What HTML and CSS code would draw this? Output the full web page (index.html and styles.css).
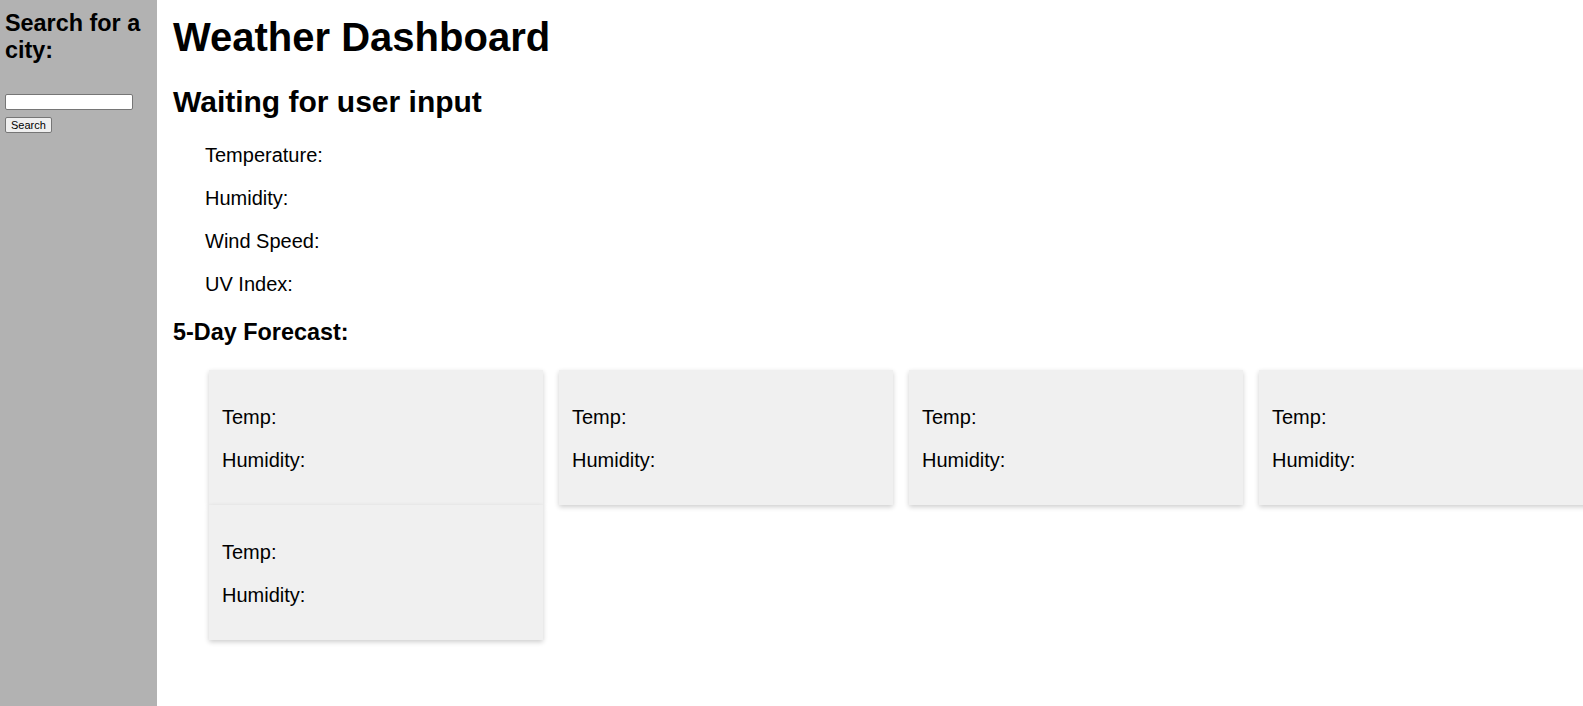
FILE: index.html
```html
<!DOCTYPE html>
<html lang="en">
<head>
<meta charset="utf-8">
<title>Weather Dashboard</title>
<link rel="stylesheet" href="styles.css">
</head>
<body>
<div class="layout">
  <aside class="sidebar">
    <h3 class="sidebar-title">Search for a city:</h3>
    <form class="search-form">
      <input class="search-input" type="text">
      <button class="search-btn" type="button">Search</button>
    </form>
  </aside>
  <main class="main">
    <h1 class="page-title">Weather Dashboard</h1>
    <h2 class="city-title">Waiting for user input</h2>
    <div class="stats">
      <p class="stat">Temperature:</p>
      <p class="stat">Humidity:</p>
      <p class="stat">Wind Speed:</p>
      <p class="stat">UV Index:</p>
    </div>
    <h3 class="forecast-title">5-Day Forecast:</h3>
    <div class="forecast">
      <div class="card"><p class="card-line">Temp:</p><p class="card-line">Humidity:</p></div>
      <div class="card"><p class="card-line">Temp:</p><p class="card-line">Humidity:</p></div>
      <div class="card"><p class="card-line">Temp:</p><p class="card-line">Humidity:</p></div>
      <div class="card"><p class="card-line">Temp:</p><p class="card-line">Humidity:</p></div>
      <div class="card"><p class="card-line">Temp:</p><p class="card-line">Humidity:</p></div>
    </div>
  </main>
</div>
</body>
</html>
```
FILE: styles.css
```css
html, body {
  margin: 0;
  padding: 0;
  overflow: hidden;
}

body {
  font-family: "Liberation Sans", Arial, sans-serif;
  font-size: 20px;
  color: #000;
  background: #fff;
}

.layout {
  display: flex;
  min-height: 100vh;
}

.sidebar {
  width: 157px;
  flex: 0 0 157px;
  box-sizing: border-box;
  background: #b2b2b2;
  padding: 10px 4px 0 5px;
}

.sidebar-title {
  margin: 0;
  font-size: 23.4px;
  font-weight: bold;
  line-height: normal;
}

.search-form {
  display: flex;
  flex-direction: column;
  align-items: flex-start;
  gap: 7px;
  margin-top: 30px;
}

.search-input {
  box-sizing: border-box;
  width: 128px;
  height: 16px;
  margin: 0;
  padding: 0 2px;
  border: 1px solid #767676;
  border-radius: 2px;
  background: #fff;
  font-size: 11px;
}

.search-btn {
  box-sizing: border-box;
  height: 16px;
  margin: 0;
  padding: 0 5px;
  border: 1px solid #767676;
  border-radius: 2px;
  background: #efefef;
  font-family: "Liberation Sans", Arial, sans-serif;
  font-size: 11px;
  line-height: 12px;
  color: #000;
}

.main {
  flex: 1 1 auto;
  min-width: 0;
  overflow: hidden;
  padding-left: 16px;
}

.page-title {
  margin: 15px 0 25px;
  font-size: 40px;
  line-height: normal;
}

.city-title {
  margin: 25px 0 25px;
  font-size: 30px;
  line-height: normal;
}

.stats {
  padding-left: 32px;
}

.stat {
  margin: 20px 0;
  line-height: normal;
}

.forecast-title {
  margin: 23px 0 24px;
  font-size: 23.4px;
  line-height: normal;
}

.forecast {
  display: grid;
  grid-template-columns: repeat(4, 334px);
  column-gap: 16px;
  row-gap: 0;
  margin-left: 36px;
}

.card {
  background: #f0f0f0;
  padding: 16px 13px 13px;
  box-shadow: 0 2px 5px rgba(0, 0, 0, 0.2);
}

.card-line {
  margin: 20px 0;
  line-height: normal;
}
```
